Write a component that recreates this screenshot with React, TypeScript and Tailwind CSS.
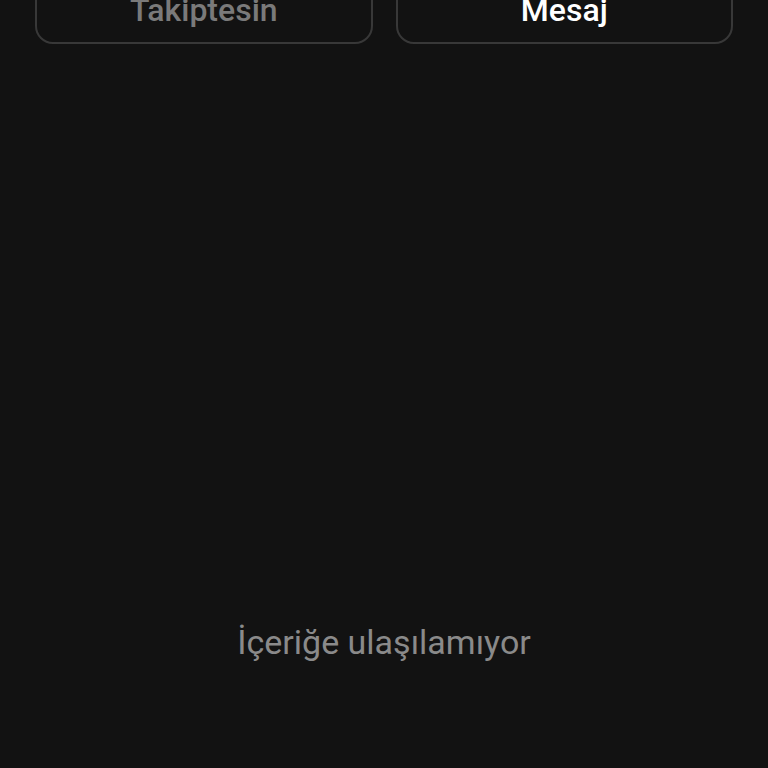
import React from 'react';

const ProfileButton: React.FC<{ label: string; muted?: boolean }> = ({ label, muted }) => (
  <button
    type="button"
    className={`flex-1 h-[68px] rounded-[18px] border-2 border-[#383838] flex items-center justify-center text-[32px] font-medium ${
      muted ? 'text-[#7a7a7a]' : 'text-white'
    }`}
  >
    {label}
  </button>
);

export default function App() {
  return (
    <div
      className="w-full h-screen overflow-hidden bg-[#121212] flex flex-col"
      style={{ fontFamily: 'Roboto, "Noto Sans", sans-serif' }}
    >
      {/* Action buttons, scrolled partly out of view */}
      <div className="flex gap-[23px] px-[35px] mt-[-24px]">
        <ProfileButton label="Takiptesin" muted />
        <ProfileButton label="Mesaj" />
      </div>

      {/* Empty state */}
      <div className="flex-1 flex items-start justify-center pt-[578px]">
        <p className="text-[34px] leading-[40px] text-[#8a8a8a]">İçeriğe ulaşılamıyor</p>
      </div>
    </div>
  );
}
